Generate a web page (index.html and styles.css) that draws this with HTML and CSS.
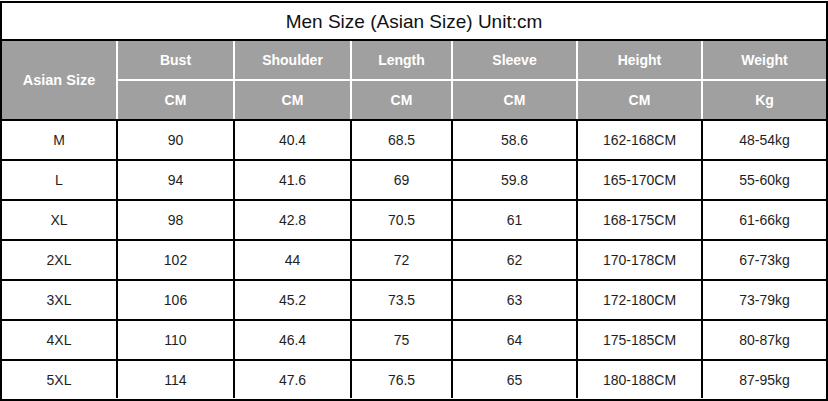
FILE: index.html
```html
<!DOCTYPE html>
<html lang="en">
<head>
<meta charset="utf-8">
<title>Men Size Chart</title>
<link rel="stylesheet" href="styles.css">
</head>
<body>
<div class="chart">
  <div class="title">Men Size (Asian Size) Unit:cm</div>
  <div class="head">
    <div class="hcell size">Asian Size</div>
    <div class="hcell">Bust</div>
    <div class="hcell">Shoulder</div>
    <div class="hcell">Length</div>
    <div class="hcell">Sleeve</div>
    <div class="hcell">Height</div>
    <div class="hcell">Weight</div>
    <div class="hcell">CM</div>
    <div class="hcell">CM</div>
    <div class="hcell">CM</div>
    <div class="hcell">CM</div>
    <div class="hcell">CM</div>
    <div class="hcell">Kg</div>
  </div>
  <div class="body">
    <div class="cell">M</div><div class="cell">90</div><div class="cell">40.4</div><div class="cell">68.5</div><div class="cell">58.6</div><div class="cell">162-168CM</div><div class="cell">48-54kg</div>
    <div class="cell">L</div><div class="cell">94</div><div class="cell">41.6</div><div class="cell">69</div><div class="cell">59.8</div><div class="cell">165-170CM</div><div class="cell">55-60kg</div>
    <div class="cell">XL</div><div class="cell">98</div><div class="cell">42.8</div><div class="cell">70.5</div><div class="cell">61</div><div class="cell">168-175CM</div><div class="cell">61-66kg</div>
    <div class="cell">2XL</div><div class="cell">102</div><div class="cell">44</div><div class="cell">72</div><div class="cell">62</div><div class="cell">170-178CM</div><div class="cell">67-73kg</div>
    <div class="cell">3XL</div><div class="cell">106</div><div class="cell">45.2</div><div class="cell">73.5</div><div class="cell">63</div><div class="cell">172-180CM</div><div class="cell">73-79kg</div>
    <div class="cell">4XL</div><div class="cell">110</div><div class="cell">46.4</div><div class="cell">75</div><div class="cell">64</div><div class="cell">175-185CM</div><div class="cell">80-87kg</div>
    <div class="cell">5XL</div><div class="cell">114</div><div class="cell">47.6</div><div class="cell">76.5</div><div class="cell">65</div><div class="cell">180-188CM</div><div class="cell">87-95kg</div>
  </div>
</div>
</body>
</html>
```
FILE: styles.css
```css
html, body {
  margin: 0;
  padding: 0;
  background: #ffffff;
}
body {
  font-family: "Liberation Sans", Arial, sans-serif;
  color: #1a1a1a;
}
.chart {
  box-sizing: border-box;
  width: 828px;
  height: 400px;
  margin-top: 1px;
  border: 2px solid #000;
  display: flex;
  flex-direction: column;
}
.title {
  height: 36px;
  display: flex;
  align-items: center;
  justify-content: center;
  font-size: 19px;
  color: #111;
  border-bottom: 2px solid #000;
  padding-top: 1px;
  box-sizing: border-box;
  height: 38px;
}
.head,
.body {
  display: grid;
  grid-template-columns: 114px 115px 115px 99px 123px 123px 123px;
  column-gap: 2px;
  row-gap: 2px;
}
.head {
  background: #ffffff;
  grid-template-rows: 38px 38px;
  border-bottom: 2px solid #000;
}
.hcell {
  background: #a0a0a0;
  color: #ffffff;
  font-weight: bold;
  font-size: 14px;
  display: flex;
  align-items: center;
  justify-content: center;
}
.hcell.size {
  grid-row: span 2;
  font-size: 14.5px;
}
.body {
  background: #000;
  grid-template-rows: repeat(6, 38px) 37px;
}
.cell {
  background: #ffffff;
  font-size: 14px;
  color: #1e1e1e;
  display: flex;
  align-items: center;
  justify-content: center;
}
```
